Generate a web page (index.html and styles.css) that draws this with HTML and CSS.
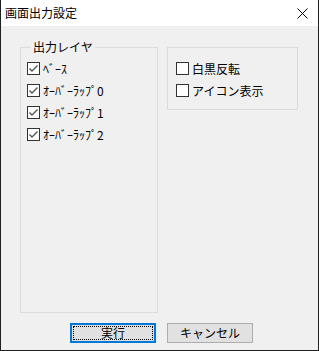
FILE: index.html
```html
<!DOCTYPE html>
<html lang="ja">

<head>
    <meta charset="UTF-8">
    <title>画面出力設定</title>
    <link rel="stylesheet" href="styles.css">
</head>

<body>
    <div class="window">
        <div class="titlebar">
            <span class="title">画面出力設定</span>
            <span class="close">
                <svg width="11" height="11" viewBox="0 0 11 11">
                    <path d="M0.5 0.5 L10.5 10.5 M10.5 0.5 L0.5 10.5" stroke="#000" stroke-width="1" fill="none" />
                </svg>
            </span>
        </div>

        <div class="content">
            <div class="groups">
                <fieldset class="group group-layer">
                    <legend>出力レイヤ</legend>
                    <label class="check"><span class="box checked"><svg width="11" height="11" viewBox="0 0 11 11"><path d="M1.5 5.5 L4 8 L9.5 2.5" stroke="#555" stroke-width="1.4" fill="none" /></svg></span>ﾍﾞｰｽ</label>
                    <label class="check"><span class="box checked"><svg width="11" height="11" viewBox="0 0 11 11"><path d="M1.5 5.5 L4 8 L9.5 2.5" stroke="#555" stroke-width="1.4" fill="none" /></svg></span>ｵｰﾊﾞｰﾗｯﾌﾟ0</label>
                    <label class="check"><span class="box checked"><svg width="11" height="11" viewBox="0 0 11 11"><path d="M1.5 5.5 L4 8 L9.5 2.5" stroke="#555" stroke-width="1.4" fill="none" /></svg></span>ｵｰﾊﾞｰﾗｯﾌﾟ1</label>
                    <label class="check"><span class="box checked"><svg width="11" height="11" viewBox="0 0 11 11"><path d="M1.5 5.5 L4 8 L9.5 2.5" stroke="#555" stroke-width="1.4" fill="none" /></svg></span>ｵｰﾊﾞｰﾗｯﾌﾟ2</label>
                </fieldset>

                <div class="group group-option">
                    <label class="check"><span class="box"></span>白黒反転</label>
                    <label class="check"><span class="box"></span>アイコン表示</label>
                </div>
            </div>

            <div class="buttons">
                <button class="btn btn-default">実行</button>
                <button class="btn">キャンセル</button>
            </div>
        </div>
    </div>
</body>

</html>
```

FILE: styles.css
```css
* {
    box-sizing: border-box;
    margin: 0;
    padding: 0;
}

body {
    font-family: "Noto Sans CJK JP", "Noto Sans", sans-serif;
    font-size: 12px;
    line-height: 14px;
    color: #000;
    background-color: #fff;
}

.window {
    width: 319px;
    height: 351px;
    border: 1px solid #1f1f1f;
    border-top: none;
    background-color: #f0f0f0;
    display: flex;
    flex-direction: column;
}

.titlebar {
    height: 26px;
    background-color: #fff;
    display: flex;
    align-items: center;
    justify-content: space-between;
    padding: 0 10px 0 4px;
}

.close {
    display: flex;
    width: 11px;
    height: 11px;
}

.content {
    flex: 1;
    display: flex;
    flex-direction: column;
}

.groups {
    display: flex;
    align-items: flex-start;
    gap: 9px;
    padding-left: 19px;
}

.group {
    border: 1px solid #dcdcdc;
    display: flex;
    flex-direction: column;
    gap: 7px;
}

.group-layer {
    width: 138px;
    height: 273px;
    margin-top: 14px;
    padding: 7px 0 0 6px;
}

.group-layer legend {
    margin-left: 4px;
    padding: 0 2px;
    font-size: 12px;
    line-height: 14px;
}

.group-option {
    width: 131px;
    height: 63px;
    margin-top: 21px;
    padding: 13px 0 0 8px;
}

.check {
    display: flex;
    align-items: center;
    height: 15px;
    gap: 3px;
    white-space: nowrap;
}

.box {
    width: 13px;
    height: 13px;
    border: 1px solid #333;
    background-color: #fff;
    display: flex;
    flex-shrink: 0;
}

.buttons {
    display: flex;
    gap: 11px;
    padding-left: 69px;
    margin-top: 10px;
}

.btn {
    width: 86px;
    height: 20px;
    font-family: inherit;
    font-size: 12px;
    line-height: 14px;
    background-color: #e1e1e1;
    border: 1px solid #adadad;
    color: #000;
}

.btn-default {
    border: 2px solid #0078d7;
    outline: 1px dotted #000;
    outline-offset: -4px;
}
```
